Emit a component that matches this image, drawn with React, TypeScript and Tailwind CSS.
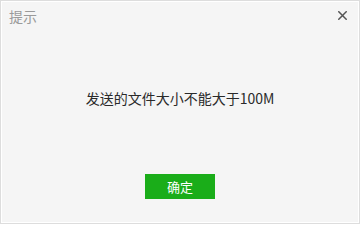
import React from "react";

export default function App() {
  return (
    <div
      className="w-[360px] h-[224px] bg-[#f5f5f5] border border-[#dddddd] shadow-[inset_1px_1px_0_#ffffff,inset_-1px_-1px_0_#ffffff] flex flex-col"
      style={{ fontFamily: '"Noto Sans CJK SC", "Noto Sans", sans-serif' }}
    >
      <div className="h-[29px] flex items-center justify-between pl-[8px] pr-[12px] shrink-0">
        <span className="text-[14px] leading-none text-[#9a9a9a]">提示</span>
        <svg width="9" height="9" viewBox="0 0 9 9" className="mt-[-1px]">
          <path d="M0.8 0.8 L8.2 8.2 M8.2 0.8 L0.8 8.2" stroke="#555555" strokeWidth="1.5" strokeLinecap="square" />
        </svg>
      </div>
      <div className="mt-[56px] h-[24px] flex items-center justify-center">
        <span className="text-[14px] leading-none text-[#2a2a2a]">发送的文件大小不能大于100M</span>
      </div>
      <div className="mt-[64px] flex justify-center">
        <button className="w-[70px] h-[25px] bg-[#1aad19] text-white text-[13px] leading-none flex items-center justify-center">
          确定
        </button>
      </div>
    </div>
  );
}
